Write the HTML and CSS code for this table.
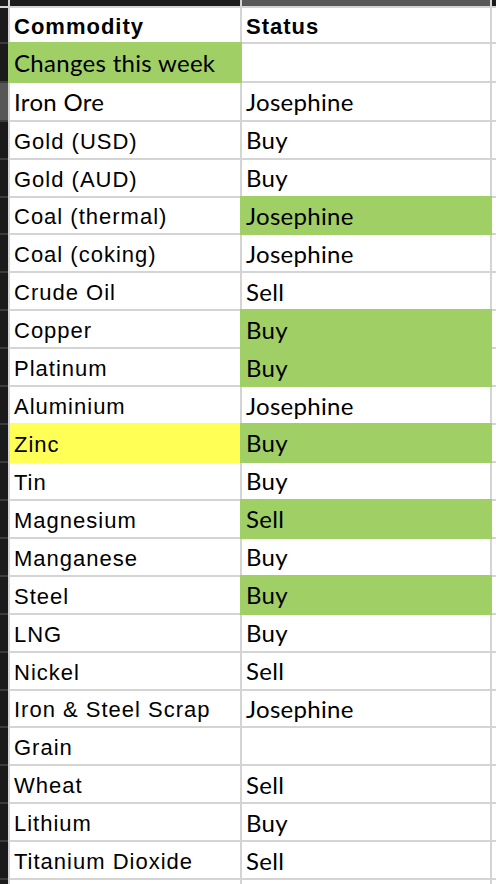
FILE: index.html
```html
<!DOCTYPE html>
<html>
<head>
<meta charset="utf-8">
<link rel="stylesheet" href="styles.css">
</head>
<body>
<div class="sheet">
  <div class="bar"></div><div class="bar"></div><div class="bar sel"></div><div class="bar"></div>

  <div class="rh"></div><div class="c ar hd">Commodity</div><div class="c ar hd">Status</div><div class="x"></div>
  <div class="rh"></div><div class="c ca green">Changes this week</div><div class="c ca"></div><div class="x"></div>
  <div class="rh sel"></div><div class="c ca">Iron Ore</div><div class="c ca">Josephine</div><div class="x"></div>
  <div class="rh"></div><div class="c ar">Gold (USD)</div><div class="c ca">Buy</div><div class="x"></div>
  <div class="rh"></div><div class="c ar">Gold (AUD)</div><div class="c ca">Buy</div><div class="x"></div>
  <div class="rh"></div><div class="c ar">Coal (thermal)</div><div class="c ca green">Josephine</div><div class="x"></div>
  <div class="rh"></div><div class="c ar">Coal (coking)</div><div class="c ca">Josephine</div><div class="x"></div>
  <div class="rh"></div><div class="c ar">Crude Oil</div><div class="c ca">Sell</div><div class="x"></div>
  <div class="rh"></div><div class="c ar">Copper</div><div class="c ca green">Buy</div><div class="x"></div>
  <div class="rh"></div><div class="c ar">Platinum</div><div class="c ca green">Buy</div><div class="x"></div>
  <div class="rh"></div><div class="c ar">Aluminium</div><div class="c ca">Josephine</div><div class="x"></div>
  <div class="rh"></div><div class="c ar yellow">Zinc</div><div class="c ca green">Buy</div><div class="x"></div>
  <div class="rh"></div><div class="c ar">Tin</div><div class="c ca">Buy</div><div class="x"></div>
  <div class="rh"></div><div class="c ar">Magnesium</div><div class="c ca green">Sell</div><div class="x"></div>
  <div class="rh"></div><div class="c ar">Manganese</div><div class="c ca">Buy</div><div class="x"></div>
  <div class="rh"></div><div class="c ar">Steel</div><div class="c ca green">Buy</div><div class="x"></div>
  <div class="rh"></div><div class="c ar">LNG</div><div class="c ca">Buy</div><div class="x"></div>
  <div class="rh"></div><div class="c ar">Nickel</div><div class="c ca">Sell</div><div class="x"></div>
  <div class="rh"></div><div class="c ar">Iron &amp; Steel Scrap</div><div class="c ca">Josephine</div><div class="x"></div>
  <div class="rh"></div><div class="c ar">Grain</div><div class="c ca"></div><div class="x"></div>
  <div class="rh"></div><div class="c ar">Wheat</div><div class="c ca">Sell</div><div class="x"></div>
  <div class="rh"></div><div class="c ar">Lithium</div><div class="c ca">Buy</div><div class="x"></div>
  <div class="rh"></div><div class="c ar">Titanium Dioxide</div><div class="c ca">Sell</div><div class="x"></div>

  <div class="rh"></div><div class="c"></div><div class="c"></div><div class="x"></div>
</div>
</body>
</html>
```
FILE: styles.css
```css
html, body {
  margin: 0;
  padding: 0;
  background: #ffffff;
  overflow: hidden;
}

.sheet {
  display: grid;
  grid-template-columns: 8px 230px 248px 4px;
  grid-template-rows: 6px 34.3px 36.7px 36.7px repeat(20, 35.93px) 3.7px;
  gap: 2px;
  background: #d4d4d4;
  width: 496px;
  height: 884px;
  overflow: hidden;
}

.bar {
  background: #1b1b1b;
}

.bar.sel {
  background: #585858;
}

.rh {
  background: #1b1b1b;
  box-shadow: 0 2px 0 0 #3c3c3c;
}

.rh.sel {
  background: #575757;
}

.c {
  background: #ffffff;
  display: flex;
  align-items: flex-end;
  padding: 0 0 0 4px;
  color: #000000;
  white-space: nowrap;
  overflow: visible;
}

.x {
  background: #ffffff;
}

.ar {
  font-family: "Liberation Sans", Arial, sans-serif;
  font-size: 22px;
  letter-spacing: 1px;
  line-height: 24px;
  padding-bottom: 4px;
}

.hd {
  font-weight: bold;
  letter-spacing: 1px;
  padding-bottom: 3px;
}

.ca {
  font-family: Lato, "Liberation Sans", sans-serif;
  font-size: 24px;
  letter-spacing: 0.3px;
  line-height: 24px;
  padding-bottom: 5.5px;
}

.green {
  background: #a0cf65;
  box-shadow: 2px 0 0 0 #a0cf65, -2px 0 0 0 #a0cf65, 0 2px 0 0 #a0cf65, 0 -2px 0 0 #a0cf65,
    2px 2px 0 0 #a0cf65, 2px -2px 0 0 #a0cf65, -2px 2px 0 0 #a0cf65, -2px -2px 0 0 #a0cf65;
}

.yellow {
  background: #ffff55;
  box-shadow: 2px 0 0 0 #ffff55, 0 2px 0 0 #ffff55, 0 -2px 0 0 #ffff55, 2px 2px 0 0 #ffff55, 2px -2px 0 0 #ffff55;
}
```
